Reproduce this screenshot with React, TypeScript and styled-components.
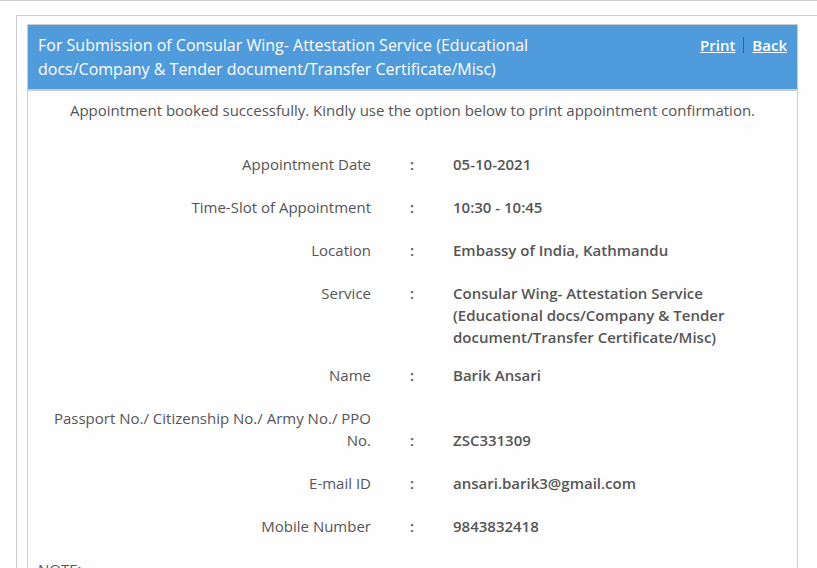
import React from "react";
import styled, { createGlobalStyle } from "styled-components";

const GlobalStyle = createGlobalStyle`
  * { box-sizing: border-box; }
  body {
    margin: 0;
    background: #fff;
    color: #555;
    font-family: "Open Sans", sans-serif;
    font-size: 15px;
    line-height: 22px;
  }
`;

const Page = styled.main`
  border-top: 1px solid #ccc;
  padding: 14px 0 0 16px;
`;

const Outer = styled.div`
  border: 1px solid #ccc;
  border-right: 0;
  border-bottom: 0;
  padding: 8px 19px 0 10px;
  background: #fefefe;
`;

const Panel = styled.section`
  border: 1px solid #ccc;
`;

const Header = styled.header`
  display: flex;
  justify-content: space-between;
  align-items: flex-start;
  padding: 8px 10px;
  border-bottom: 2px solid #ccc;
  background: #4f9bdb;
  color: #fff;
  line-height: 24px;
`;

const Title = styled.h1`
  margin: 0;
  max-width: 520px;
  font-size: 16px;
  font-weight: 400;
`;

const Actions = styled.nav`
  display: flex;
  align-items: center;
`;

const ActionLink = styled.a`
  color: #fff;
  font-weight: 600;
  text-decoration: underline;
`;

const Divider = styled.span`
  width: 1px;
  height: 16px;
  margin: 0 8px;
  background: #585489;
`;

const Message = styled.p`
  margin: 0;
  padding: 8px 0 32px;
  text-align: center;
`;

const Details = styled.table`
  width: 100%;
  border-collapse: collapse;
  table-layout: fixed;
`;

type Align = "top" | "bottom";

const Row = styled.tr<{ $align: Align }>`
  th, td { vertical-align: ${({ $align }) => $align}; }
`;

const Label = styled.th`
  width: 343px;
  padding: 0 0 21px 20px;
  font-weight: 400;
  text-align: right;
`;

const Colon = styled.td`
  width: 82px;
  padding: 0 0 21px;
  font-weight: 600;
  text-align: center;
`;

const Value = styled.td<{ $tight?: boolean }>`
  padding: 0 60px ${({ $tight }) => ($tight ? 16 : 21)}px 0;
  font-weight: 600;
`;

const Note = styled.p`
  margin: 0;
  padding: 0 10px;
`;

interface Detail {
  label: string;
  value: string;
  align?: Align;
  tight?: boolean;
}

const details: Detail[] = [
  { label: "Appointment Date", value: "05-10-2021" },
  { label: "Time-Slot of Appointment", value: "10:30 - 10:45" },
  { label: "Location", value: "Embassy of India, Kathmandu" },
  {
    label: "Service",
    value:
      "Consular Wing- Attestation Service (Educational docs/Company & Tender document/Transfer Certificate/Misc)",
    tight: true,
  },
  { label: "Name", value: "Barik Ansari" },
  {
    label: "Passport No./ Citizenship No./ Army No./ PPO No.",
    value: "ZSC331309",
    align: "bottom",
  },
  { label: "E-mail ID", value: "ansari.barik3@gmail.com" },
  { label: "Mobile Number", value: "9843832418" },
];

export default function App() {
  return (
    <Page>
      <GlobalStyle />
      <Outer>
        <Panel>
          <Header>
            <Title>
              For Submission of Consular Wing- Attestation Service (Educational
              docs/Company &amp; Tender document/Transfer Certificate/Misc)
            </Title>
            <Actions>
              <ActionLink href="#print">Print</ActionLink>
              <Divider />
              <ActionLink href="#back">Back</ActionLink>
            </Actions>
          </Header>
          <Message>
            Appointment booked successfully. Kindly use the option below to
            print appointment confirmation.
          </Message>
          <Details>
            <tbody>
              {details.map(({ label, value, align = "top", tight }) => (
                <Row key={label} $align={align}>
                  <Label scope="row">{label}</Label>
                  <Colon>:</Colon>
                  <Value $tight={tight}>{value}</Value>
                </Row>
              ))}
            </tbody>
          </Details>
          <Note>NOTE:</Note>
        </Panel>
      </Outer>
    </Page>
  );
}
